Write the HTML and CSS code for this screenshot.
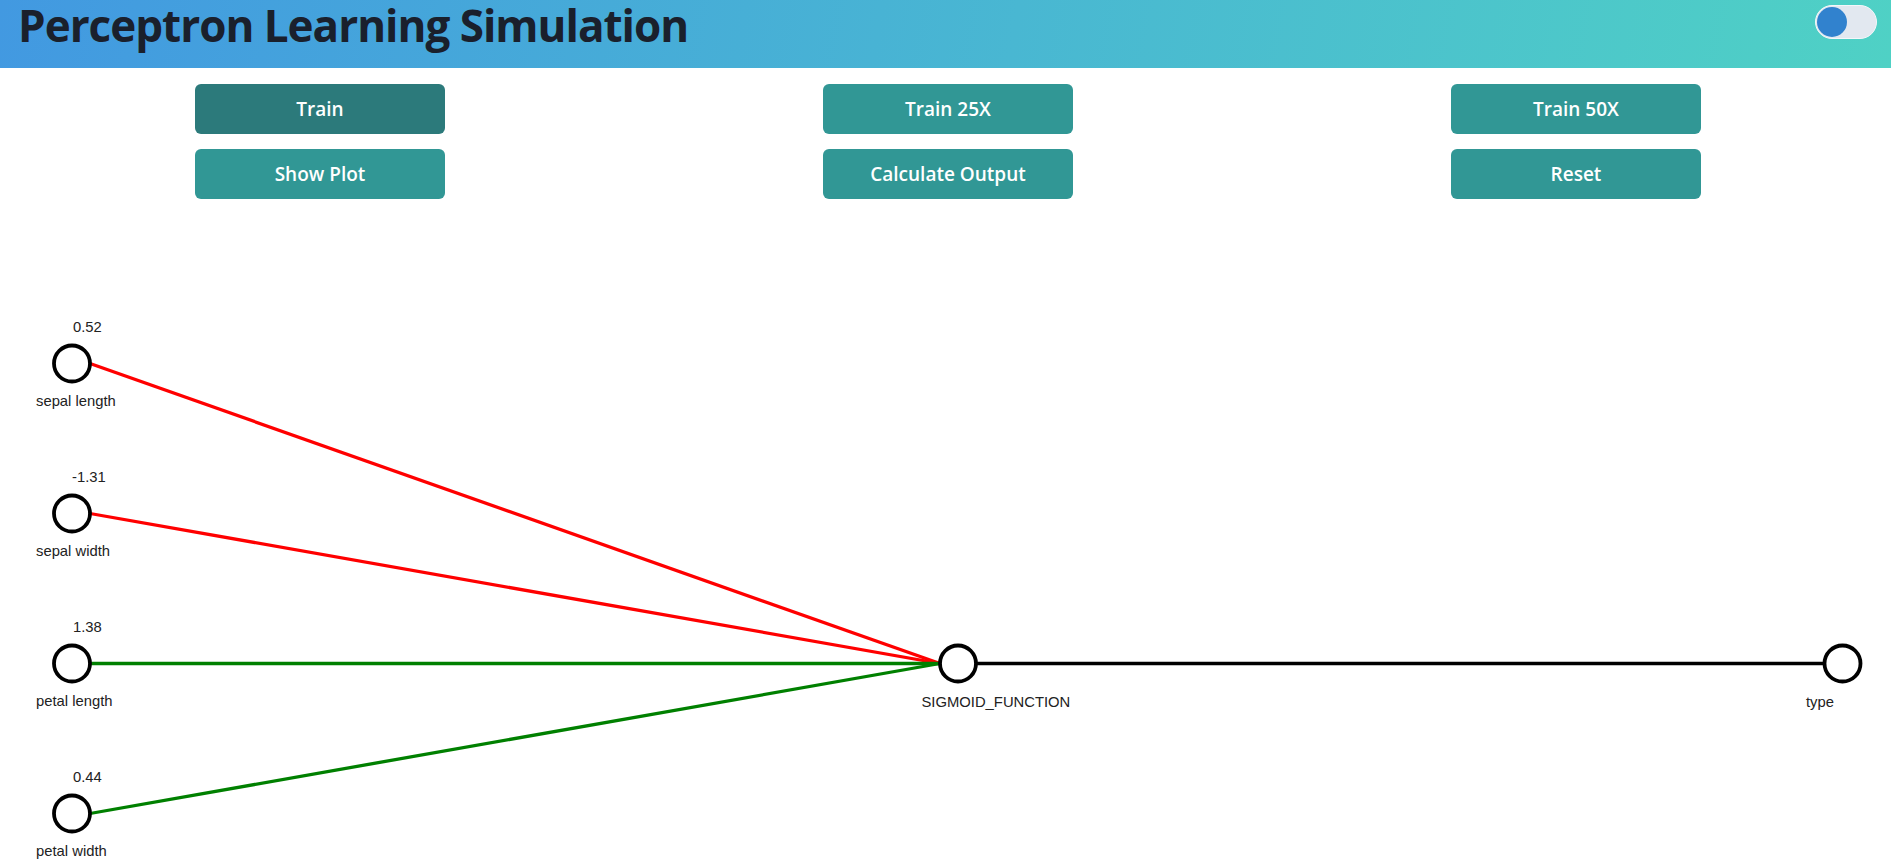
FILE: index.html
```html
<!DOCTYPE html>
<html lang="en">
<head>
<meta charset="utf-8">
<title>Perceptron Learning Simulation</title>
<link rel="stylesheet" href="styles.css">
</head>
<body>
<header class="topbar">
  <h1 class="title">Perceptron Learning Simulation</h1>
  <label class="toggle"><span class="knob"></span></label>
</header>
<section class="controls">
  <div class="col">
    <button class="btn btn-active">Train</button>
    <button class="btn">Show Plot</button>
  </div>
  <div class="col">
    <button class="btn">Train 25X</button>
    <button class="btn">Calculate Output</button>
  </div>
  <div class="col">
    <button class="btn">Train 50X</button>
    <button class="btn">Reset</button>
  </div>
</section>
<svg class="network" width="1891" height="652" viewBox="0 0 1891 652">
  <g class="edges">
    <line x1="90" y1="148.5" x2="940" y2="448.5" stroke="#ff0000"/>
    <line x1="90" y1="298.5" x2="940" y2="448.5" stroke="#ff0000"/>
    <line x1="90" y1="448.5" x2="940" y2="448.5" stroke="#008000"/>
    <line x1="90" y1="598.5" x2="940" y2="448.5" stroke="#008000"/>
    <line x1="976" y1="448.5" x2="1824.5" y2="448.5" stroke="#000000"/>
  </g>
  <g class="nodes">
    <circle cx="72" cy="148.5" r="18"/>
    <circle cx="72" cy="298.5" r="18"/>
    <circle cx="72" cy="448.5" r="18"/>
    <circle cx="72" cy="598.5" r="18"/>
    <circle cx="958" cy="448.5" r="18"/>
    <circle cx="1842.5" cy="448.5" r="18"/>
  </g>
  <g class="labels">
    <text x="73" y="116.5">0.52</text>
    <text x="36" y="191">sepal length</text>
    <text x="72" y="266.5">-1.31</text>
    <text x="36" y="341">sepal width</text>
    <text x="73" y="416.5">1.38</text>
    <text x="36" y="491">petal length</text>
    <text x="73" y="566.5">0.44</text>
    <text x="36" y="641">petal width</text>
    <text x="921.5" y="492">SIGMOID_FUNCTION</text>
    <text x="1806" y="492">type</text>
  </g>
</svg>
</body>
</html>
```
FILE: styles.css
```css
html, body {
  margin: 0;
  padding: 0;
  background: #ffffff;
  overflow: hidden;
}
body {
  font-family: "Open Sans", "Noto Sans", "Liberation Sans", sans-serif;
}
.topbar {
  height: 68px;
  display: flex;
  justify-content: space-between;
  align-items: flex-start;
  padding: 0 14px 0 18px;
  background: linear-gradient(100deg, #4299e1 0%, #4fd1c5 100%);
}
.title {
  margin: 0;
  font-size: 44px;
  line-height: 50px;
  font-weight: 700;
  color: #1a202c;
  letter-spacing: -1px;
}
.toggle {
  margin-top: 5px;
  width: 62px;
  height: 34px;
  box-sizing: border-box;
  border-radius: 17px;
  background: #e2e8f0;
  border: 1.5px solid #f4f7fa;
  display: flex;
  align-items: center;
  padding-left: 1px;
}
.knob {
  width: 30px;
  height: 30px;
  border-radius: 50%;
  background: #3182ce;
}
.controls {
  display: grid;
  grid-template-columns: repeat(3, 1fr);
  padding: 16px 1px 0 6px;
}
.col {
  display: flex;
  flex-direction: column;
  align-items: center;
  gap: 15px;
}
.btn {
  width: 250px;
  height: 50px;
  border: none;
  border-radius: 6px;
  background: #319795;
  color: #ffffff;
  font-family: "Open Sans", "Noto Sans", sans-serif;
  font-weight: 600;
  font-size: 19px;
  padding: 0;
}
.btn-active {
  background: #2c7a7b;
}
.network {
  display: block;
  margin-top: 16px;
}
.edges line {
  stroke-width: 3.3;
}
.nodes circle {
  fill: #ffffff;
  stroke: #000000;
  stroke-width: 3.8;
}
.labels text {
  font-family: "Liberation Sans", Arial, sans-serif;
  font-size: 14.8px;
  fill: #222222;
}
```
